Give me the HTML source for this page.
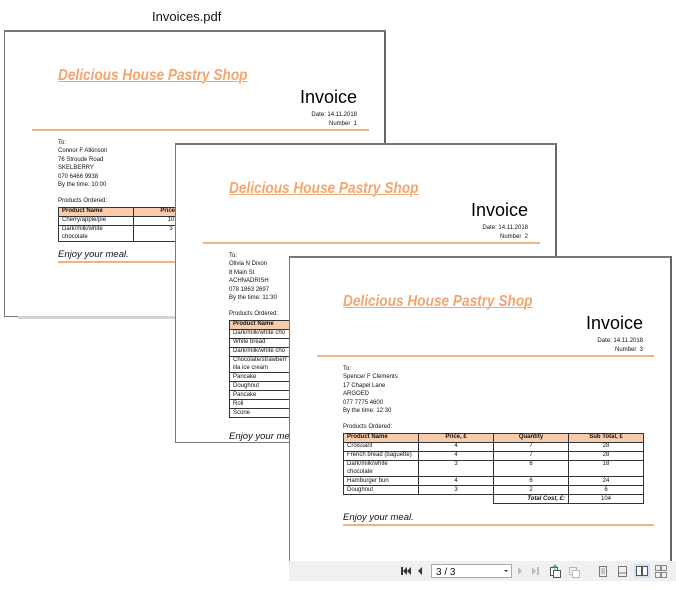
<!DOCTYPE html>
<html><head><meta charset="utf-8"><style>
*{margin:0;padding:0;box-sizing:border-box}
body{width:676px;height:590px;background:#fff;position:relative;overflow:hidden;font-family:"Liberation Sans",sans-serif}
.pg{position:absolute;width:382px;background:#fff;border:1px solid #777;border-right:2px solid #666;border-top:2px solid #777;overflow:hidden}
.t{position:absolute;left:53px;top:35px;font-size:15.5px;font-weight:bold;font-style:italic;color:#f4a46c;text-decoration:underline;text-decoration-thickness:1px;white-space:nowrap;transform:scaleX(0.88);transform-origin:left top}
.inv{position:absolute;right:27px;top:55px;font-size:18px;color:#000}
.d{position:absolute;right:27px;top:79px;font-size:6px;color:#111;text-align:right;line-height:9px}
.hl{position:absolute;left:27px;width:337px;top:97px;height:2px;background:#f4b183}
.b{position:absolute;left:53px;top:107px;font-size:6px;line-height:8.4px;color:#111;width:310px}
table{border-collapse:collapse;font-size:6px;line-height:7.5px;margin-top:1px}
td,th{border:1px solid #333;padding:0.5px 3px 0;vertical-align:top;text-align:center}
th{background:#f8cbad}
td:first-child,th:first-child{text-align:left}
.cw td,.cw th{width:75px}
.e{font-size:9.5px;font-style:italic;margin-top:9px;padding-bottom:1px;border-bottom:2px solid #f4b183;width:311px;color:#111}
.tb{position:absolute;left:289px;top:561px;width:387px;height:20px;background:#f0f0f0}
</style></head><body>
<div style="position:absolute;left:152px;top:9px;font-size:13px;color:#111">Invoices.pdf</div>

<div class="pg" style="left:4px;top:30px;height:287px">
<div class="t">Delicious House Pastry Shop</div>
<div class="inv">Invoice</div>
<div class="d">Date: 14.11.2018<br>Number&nbsp; 1</div>
<div class="hl"></div>
<div class="b">To:<br>Connor F Atkinson<br>76 Stroude Road<br>SKELBERRY<br>070 6466 9938<br>By the time: 10:00<br><div style="height:8px"></div>Products Ordered:
<table class="cw"><tr><th>Product Name</th><th>Price, £</th><th>Quantity</th><th>Sub Total, £</th></tr>
<tr><td>Cherry/apple/pie</td><td>10</td><td>1</td><td>10</td></tr>
<tr><td>Dark/milk/white chocolate</td><td>3</td><td>2</td><td>6</td></tr></table>
<div class="e">Enjoy your meal.</div></div>
</div>
<div style="position:absolute;left:18px;top:316px;width:160px;height:3px;background:#d4d4d4"></div>

<div class="pg" style="left:175px;top:143px;height:300px">
<div class="t">Delicious House Pastry Shop</div>
<div class="inv">Invoice</div>
<div class="d">Date: 14.11.2018<br>Number&nbsp; 2</div>
<div class="hl"></div>
<div class="b">To:<br>Olivia N Dixon<br>8 Main St<br>ACHNADRISH<br>078 1863 2697<br>By the time: 11:30<br><div style="height:8px"></div>Products Ordered:
<table class="cw"><tr><th>Product Name</th><th>Price, £</th><th>Quantity</th><th>Sub Total, £</th></tr>
<tr><td>Dark/milk/white cho</td><td>3</td><td>1</td><td>3</td></tr>
<tr><td>White bread</td><td>2</td><td>1</td><td>2</td></tr>
<tr><td>Dark/milk/white cho</td><td>3</td><td>1</td><td>3</td></tr>
<tr><td>Chocolate/strawberr<br>illa ice cream</td><td>2</td><td>1</td><td>2</td></tr>
<tr><td>Pancake</td><td>2</td><td>1</td><td>2</td></tr>
<tr><td>Doughnut</td><td>3</td><td>1</td><td>3</td></tr>
<tr><td>Pancake</td><td>2</td><td>1</td><td>2</td></tr>
<tr><td>Roll</td><td>1</td><td>1</td><td>1</td></tr>
<tr><td>Scone</td><td>2</td><td>1</td><td>2</td></tr></table>
<div class="e" style="margin-top:15px">Enjoy your meal.</div></div>
</div>

<div class="pg" style="left:289px;top:256px;height:320px;width:383px">
<div class="t">Delicious House Pastry Shop</div>
<div class="inv">Invoice</div>
<div class="d">Date: 14.11.2018<br>Number&nbsp; 3</div>
<div class="hl"></div>
<div class="b">To:<br>Spencer F Clements<br>17 Chapel Lane<br>ARGOED<br>077 7775 4600<br>By the time: 12:30<br><div style="height:8px"></div>Products Ordered:
<table class="cw"><tr><th>Product Name</th><th>Price, £</th><th>Quantity</th><th>Sub Total, £</th></tr>
<tr><td>Croissant</td><td>4</td><td>7</td><td>28</td></tr>
<tr><td>French bread (baguette)</td><td>4</td><td>7</td><td>28</td></tr>
<tr><td>Dark/milk/white<br>chocolate</td><td>3</td><td>6</td><td>18</td></tr>
<tr><td>Hamburger bun</td><td>4</td><td>6</td><td>24</td></tr>
<tr><td>Doughnut</td><td>3</td><td>2</td><td>6</td></tr>
<tr><td style="border:none"></td><td style="border:none;border-top:1px solid #333"></td><td style="text-align:right;font-style:italic;font-weight:bold">Total Cost, £:</td><td>104</td></tr></table>
<div class="e" style="margin-top:10px">Enjoy your meal.</div></div>
</div>

<div class="tb">
<svg width="387" height="20" viewBox="0 0 387 20">
<g fill="#333"><rect x="112" y="6" width="2" height="8"/><path d="M118 6 L114 10 L118 14Z"/><path d="M122 6 L118 10 L122 14Z"/><path d="M133 6 L129 10 L133 14Z"/></g>
<rect x="142.5" y="3.5" width="80" height="13" fill="#fff" stroke="#aaa"/>
<text x="147" y="14" font-size="10" font-family="Liberation Sans" fill="#111">3 / 3</text>
<path d="M215 9 L219 9 L217 11Z" fill="#333"/>
<g fill="#bbb"><path d="M229 6 L233 10 L229 14Z"/><path d="M243 6 L247 10 L243 14Z"/><rect x="248" y="6" width="2" height="8"/></g>
<rect x="261.5" y="6.5" width="7" height="8" fill="#fff" stroke="#555"/><rect x="264.5" y="9.5" width="7" height="7" fill="#fff" stroke="#555"/><path d="M266 4v5M264 6l2-2 2 2" stroke="#3a8" fill="none"/>
<rect x="280.5" y="6.5" width="7" height="7" fill="none" stroke="#bbb"/><rect x="283.5" y="9.5" width="7" height="7" fill="#fff" stroke="#bbb"/>
<rect x="310.5" y="5.5" width="7" height="10" fill="none" stroke="#777"/><path d="M312 8h4M312 10h4M312 12h4" stroke="#999"/>
<rect x="329.5" y="5.5" width="8" height="10" fill="none" stroke="#777"/><path d="M329 12h9" stroke="#777"/>
<rect x="345" y="3" width="16" height="14" fill="#cde3f7"/><rect x="347.5" y="5.5" width="5" height="9" fill="#fff" stroke="#555"/><rect x="353.5" y="5.5" width="5" height="9" fill="#fff" stroke="#555"/>
<rect x="366.5" y="4.5" width="5" height="5" fill="none" stroke="#888"/><rect x="372.5" y="4.5" width="5" height="5" fill="none" stroke="#888"/><rect x="366.5" y="11.5" width="5" height="5" fill="none" stroke="#888"/><rect x="372.5" y="11.5" width="5" height="5" fill="none" stroke="#888"/>
</svg>
</div>
</body></html>
